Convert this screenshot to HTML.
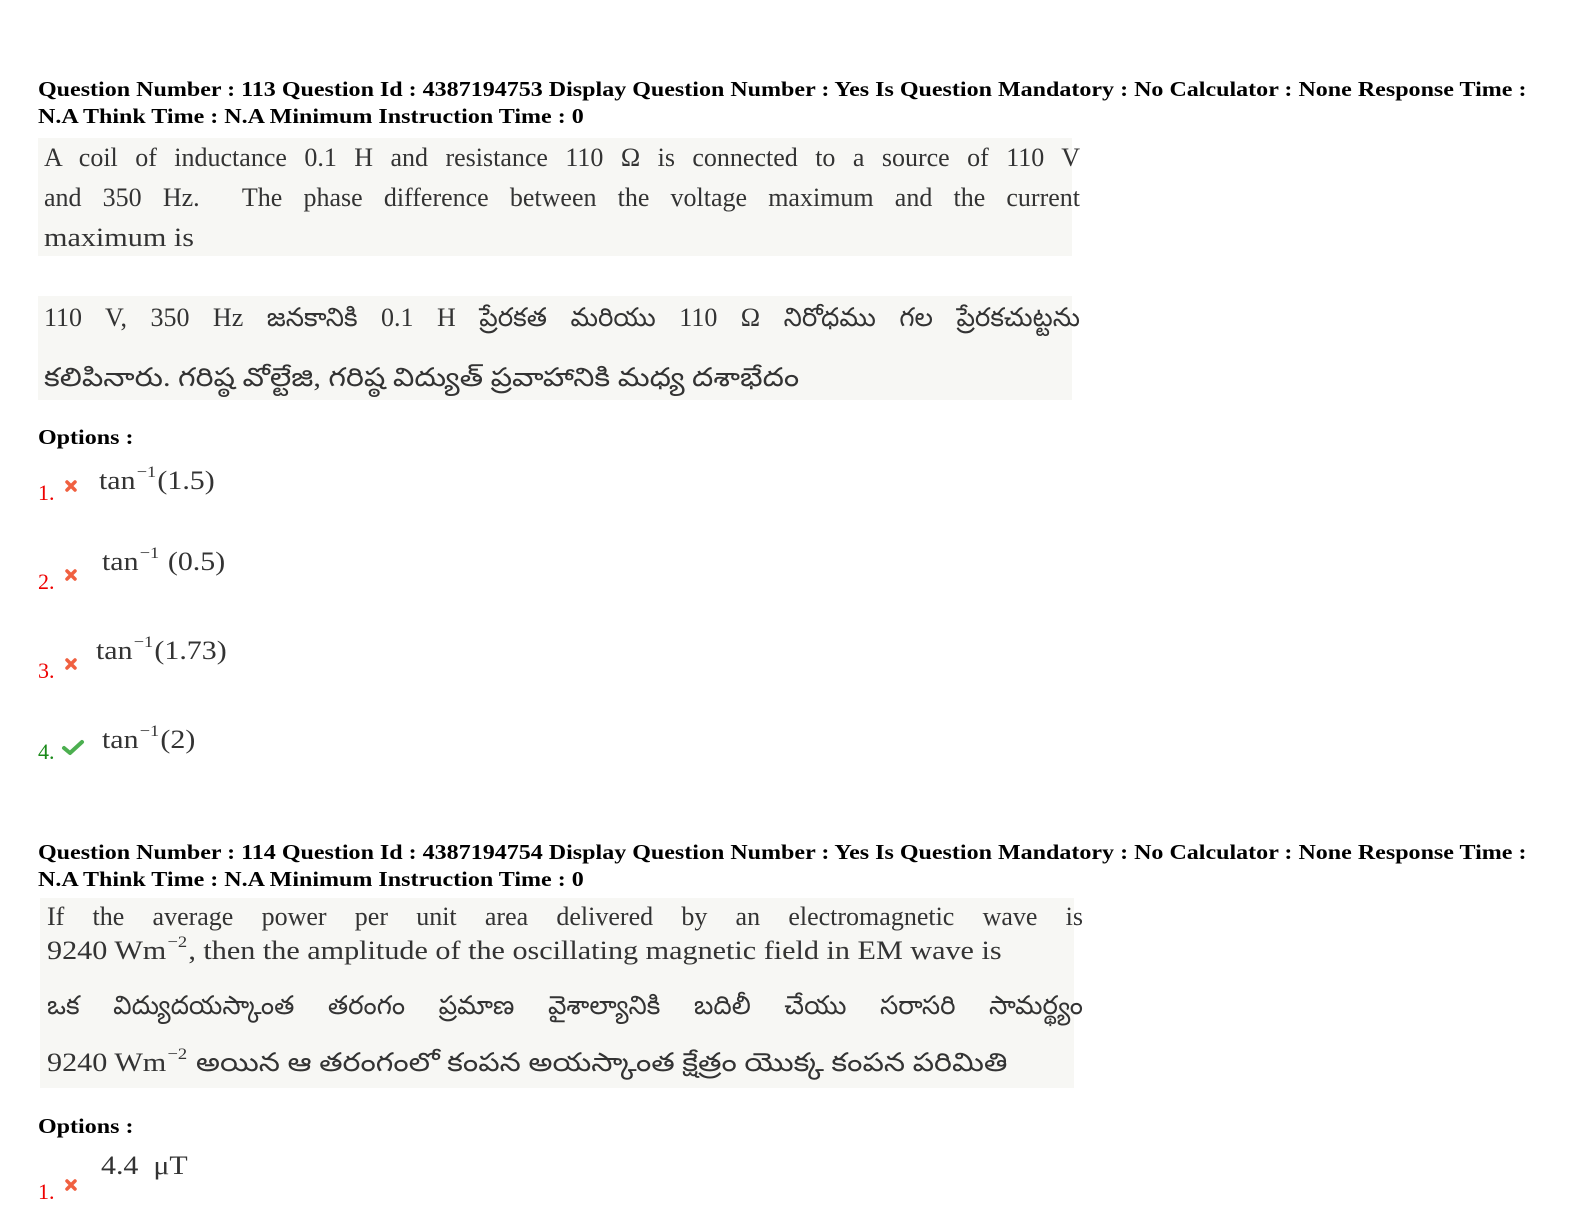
<!DOCTYPE html>
<html><head><meta charset="utf-8"><style>
body{margin:0;width:1584px;height:1224px;background:#fff;position:relative;overflow:hidden;font-family:"Liberation Serif",serif}
.a{position:absolute;white-space:nowrap;line-height:1;transform-origin:0 0}
.h{font-weight:bold;font-size:21px;color:#000;left:38px;transform:scaleX(1.144)}
.t{font-size:26px;color:#333;left:44px}
.s{transform:scaleX(1.16)}
.o{transform:scaleX(1.15)}
.j{width:1036px;text-align:justify;text-align-last:justify}
.n{font-size:22px;left:38px}
.r{color:#e00}.g{color:#1a8a1a}
.x{position:absolute;left:64px;width:14px;height:14px}
sup{font-size:16px;vertical-align:0;position:relative;top:-12px;padding:0 1px}
.bg{position:absolute;background:#f7f7f4}
</style></head><body>
<div class="bg" style="left:38px;top:138px;width:1034px;height:118px"></div>
<div class="bg" style="left:38px;top:296px;width:1034px;height:104px"></div>
<div class="bg" style="left:40px;top:898px;width:1034px;height:190px"></div>

<div class="a h" style="top:79px">Question Number : 113 Question Id : 4387194753 Display Question Number : Yes Is Question Mandatory : No Calculator : None Response Time :</div>
<div class="a h" style="top:106px">N.A Think Time : N.A Minimum Instruction Time : 0</div>
<div class="a t j" style="top:145px">A coil of inductance 0.1 H and resistance 110 Ω is connected to a source of 110 V</div>
<div class="a t j" style="top:185px">and 350 Hz. &nbsp;The phase difference between the voltage maximum and the current</div>
<div class="a t s" style="top:225px">maximum is</div>
<div class="a t j" style="top:305px">110 V, 350 Hz జనకానికి 0.1 H ప్రేరకత మరియు 110 Ω నిరోధము గల ప్రేరకచుట్టను</div>
<div class="a t s" style="top:365px">కలిపినారు. గరిష్ఠ వోల్టేజి, గరిష్ఠ విద్యుత్ ప్రవాహానికి మధ్య దశాభేదం</div>
<div class="a h" style="top:427px">Options :</div>

<div class="a n r" style="top:482px">1.</div>
<svg class="x" style="top:479px" viewBox="0 0 14 14"><path d="M3 3L11 11M11 3L3 11" stroke="#f06040" stroke-width="3.5" stroke-linecap="round"/></svg>
<div class="a t o" style="left:99px;top:468px">tan<sup>−1</sup>(1.5)</div>

<div class="a n r" style="top:571px">2.</div>
<svg class="x" style="top:568px" viewBox="0 0 14 14"><path d="M3 3L11 11M11 3L3 11" stroke="#f06040" stroke-width="3.5" stroke-linecap="round"/></svg>
<div class="a t o" style="left:102px;top:549px">tan<sup>−1</sup> (0.5)</div>

<div class="a n r" style="top:660px">3.</div>
<svg class="x" style="top:657px" viewBox="0 0 14 14"><path d="M3 3L11 11M11 3L3 11" stroke="#f06040" stroke-width="3.5" stroke-linecap="round"/></svg>
<div class="a t o" style="left:96px;top:638px">tan<sup>−1</sup>(1.73)</div>

<div class="a n g" style="top:741px">4.</div>
<svg style="position:absolute;left:61px;top:738px;width:24px;height:18px" viewBox="0 0 24 18"><path d="M3 10L9 15L21 4" stroke="#4caf50" stroke-width="4" fill="none" stroke-linecap="round" stroke-linejoin="round"/></svg>
<div class="a t o" style="left:102px;top:727px">tan<sup>−1</sup>(2)</div>

<div class="a h" style="top:842px">Question Number : 114 Question Id : 4387194754 Display Question Number : Yes Is Question Mandatory : No Calculator : None Response Time :</div>
<div class="a h" style="top:869px">N.A Think Time : N.A Minimum Instruction Time : 0</div>
<div class="a t j" style="left:47px;top:904px">If the average power per unit area delivered by an electromagnetic wave is</div>
<div class="a t s" style="left:47px;top:938px">9240 Wm<sup>−2</sup>, then the amplitude of the oscillating magnetic field in EM wave is</div>
<div class="a t j" style="left:47px;top:993px">ఒక విద్యుదయస్కాంత తరంగం ప్రమాణ వైశాల్యానికి బదిలీ చేయు సరాసరి సామర్థ్యం</div>
<div class="a t s" style="left:47px;top:1050px">9240 Wm<sup>−2</sup> అయిన ఆ తరంగంలో కంపన అయస్కాంత క్షేత్రం యొక్క కంపన పరిమితి</div>
<div class="a h" style="top:1116px">Options :</div>
<div class="a n r" style="top:1181px">1.</div>
<svg class="x" style="top:1178px" viewBox="0 0 14 14"><path d="M3 3L11 11M11 3L3 11" stroke="#f06040" stroke-width="3.5" stroke-linecap="round"/></svg>
<div class="a t o" style="left:101px;top:1153px">4.4 &nbsp;μT</div>
</body></html>
